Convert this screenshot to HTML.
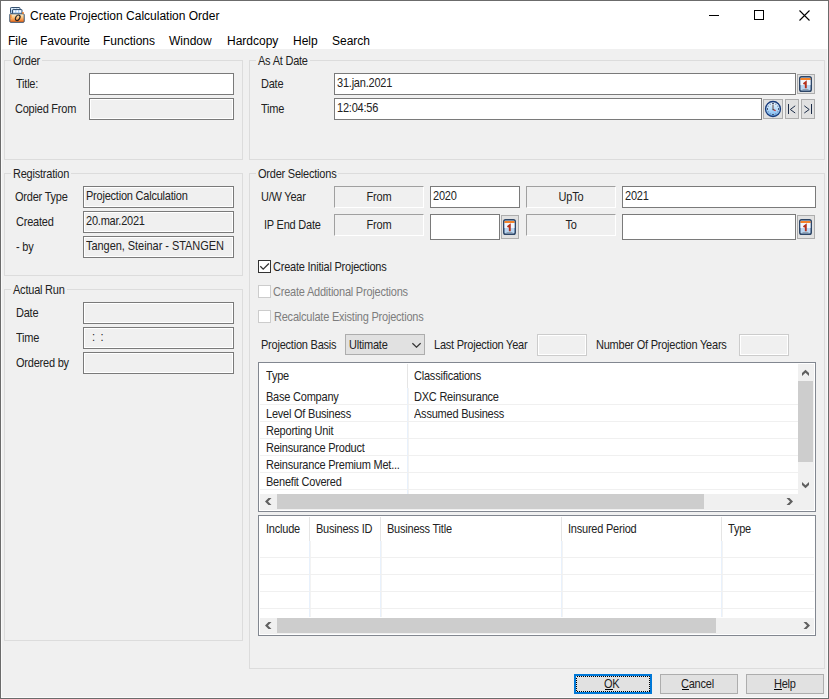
<!DOCTYPE html>
<html><head><meta charset="utf-8">
<style>
*{margin:0;padding:0;box-sizing:border-box}
html,body{width:829px;height:699px;overflow:hidden;background:#f0f0f0}
body{position:relative;font-family:"Liberation Sans",sans-serif;font-size:11px;color:#000}
.a{position:absolute}
.t{position:absolute;white-space:nowrap;line-height:13px;font-size:11px;letter-spacing:-0.22px;color:#222;transform:scaleY(1.12);transform-origin:0 10px}
.win{position:absolute;left:0;top:0;width:829px;height:699px;border:1px solid #6b6b6b;background:#f0f0f0}
.title{position:absolute;left:1px;top:1px;width:827px;height:30px;background:#fff}
.menu{position:absolute;left:1px;top:31px;width:827px;height:18px;background:#fff}
.mt{position:absolute;white-space:nowrap;font-size:12px;line-height:15px}
.grp{position:absolute;border:1px solid #dcdcdc}
.cap{position:absolute;background:#f0f0f0;padding:0 2px 0 2px;white-space:nowrap;line-height:13px;top:-6px;letter-spacing:-0.22px;color:#222;transform:scaleY(1.12);transform-origin:0 10px}
.tb{position:absolute;border:1px solid #7a7a7a;background:#fff}
.ro{position:absolute;border:1px solid #7a7a7a;background:#f0f0f0;box-shadow:inset 0 0 0 1px #fff}
.dis{position:absolute;border:1px solid #cccccc;background:#f0f0f0;box-shadow:inset 0 0 0 1px #fff}
.lbl3d{position:absolute;border-top:1px solid #a0a0a0;border-left:1px solid #a0a0a0;border-bottom:1px solid #fff;border-right:1px solid #fff;background:#f0f0f0;text-align:center;line-height:21px}
.sy{display:inline-block;letter-spacing:-0.22px;color:#222;transform:scaleY(1.12);transform-origin:0 11px}
.btn{position:absolute;border:1px solid #adadad;background:#e1e1e1;text-align:center}
.grid{position:absolute;border:1px solid #828790;background:#fff}
.hl{position:absolute;height:1px;background:#f0f0f0}
.vl{position:absolute;width:1px}
</style></head><body>
<div class="win"></div>
<div class="a" style="left:1px;top:49px;width:1px;height:649px;background:#fafafa"></div>
<div class="a" style="left:1px;top:697px;width:827px;height:1px;background:#fafafa"></div>
<div class="a" style="left:827px;top:49px;width:1px;height:649px;background:#fafafa"></div>
<div class="title"></div>
<div class="menu"></div>

<!-- title icon -->
<svg class="a" style="left:9px;top:7px" width="16" height="16" viewBox="0 0 16 16">
  <defs><linearGradient id="fg" x1="0" y1="0" x2="0" y2="1"><stop offset="0" stop-color="#fff6d8"/><stop offset="0.45" stop-color="#fcc27a"/><stop offset="1" stop-color="#f0600a"/></linearGradient></defs>
  <rect x="1.5" y="0.5" width="9.5" height="6" rx="0.8" fill="#a9cdf0" stroke="#34506e" stroke-width="1"/>
  <rect x="2.4" y="1.3" width="2" height="1.8" fill="#fff"/><rect x="5.3" y="1.3" width="2" height="1.8" fill="#fff"/><rect x="8.2" y="1.3" width="2" height="1.8" fill="#fff"/>
  <rect x="3.5" y="2.5" width="9.5" height="5" rx="0.6" fill="#8fbbe8" stroke="#34506e" stroke-width="1"/>
  <rect x="4.4" y="3.3" width="2" height="2.2" fill="#fff"/><rect x="7.3" y="3.3" width="2" height="2.2" fill="#fff"/><rect x="10.2" y="3.3" width="2" height="2.2" fill="#fff"/>
  <path d="M0.8 7.5 Q0.8 6.8 1.5 6.8 H14.3 Q15.2 6.8 15.2 7.7 V14.5 Q15.2 15.3 14.4 15.3 H1.6 Q0.8 15.3 0.8 14.5 Z" fill="url(#fg)" stroke="#34506e" stroke-width="1"/>
  <rect x="1.3" y="7.6" width="1.2" height="3.5" fill="#f07a20"/>
  <ellipse cx="8.7" cy="10.8" rx="2.0" ry="3.0" transform="rotate(32 8.7 10.8)" fill="none" stroke="#262626" stroke-width="1.2"/>
  <circle cx="14" cy="6" r="0.9" fill="#f07a20"/>
</svg>
<div class="mt" style="left:30px;top:9px">Create Projection Calculation Order</div>

<!-- caption buttons -->
<div class="a" style="left:709px;top:15px;width:10px;height:1px;background:#000"></div>
<div class="a" style="left:754px;top:10px;width:10px;height:10px;border:1px solid #000"></div>
<svg class="a" style="left:799px;top:10px" width="11" height="11" viewBox="0 0 11 11"><path d="M0.5 0.5 L10.5 10.5 M10.5 0.5 L0.5 10.5" stroke="#000" stroke-width="1.1"/></svg>

<!-- menu -->
<div class="mt" style="left:8px;top:34px">File</div>
<div class="mt" style="left:40px;top:34px">Favourite</div>
<div class="mt" style="left:103px;top:34px">Functions</div>
<div class="mt" style="left:169px;top:34px">Window</div>
<div class="mt" style="left:227px;top:34px">Hardcopy</div>
<div class="mt" style="left:293px;top:34px">Help</div>
<div class="mt" style="left:332px;top:34px">Search</div>

<!-- Order group -->
<div class="grp" style="left:4px;top:60px;width:239px;height:100px"><div class="cap" style="left:6px">Order</div></div>
<div class="t" style="left:16px;top:78px">Title:</div>
<div class="tb" style="left:89px;top:73px;width:145px;height:22px"></div>
<div class="t" style="left:15px;top:103px">Copied From</div>
<div class="ro" style="left:89px;top:98px;width:145px;height:22px"></div>

<!-- As At Date group -->
<div class="grp" style="left:249px;top:60px;width:576px;height:100px"><div class="cap" style="left:6px">As At Date</div></div>
<div class="t" style="left:261px;top:78px">Date</div>
<div class="tb" style="left:334px;top:73px;width:462px;height:22px"></div>
<div class="t" style="left:337px;top:77px">31.jan.2021</div>
<div class="t" style="left:261px;top:103px">Time</div>
<div class="tb" style="left:334px;top:98px;width:428px;height:22px"></div>
<div class="t" style="left:337px;top:102px">12:04:56</div>


<!-- calendar buttons -->
<div class="btn" style="left:797px;top:74px;width:18px;height:20px"></div>
<svg class="a" style="left:799px;top:76px" width="13" height="16" viewBox="0 0 13 16">
 <rect x="0.75" y="0.75" width="11.5" height="14.5" rx="1.8" fill="#bcd7f2" stroke="#2d4566" stroke-width="1.5"/>
 <rect x="1.5" y="4" width="10" height="5" fill="#f2f7fd"/>
 <rect x="1.5" y="2" width="10" height="2" fill="#f5832a"/>
 <path d="M4.5 7.9 L6.8 6.1 V12.2" fill="none" stroke="#b3301c" stroke-width="1.9"/>
 <rect x="3.5" y="13" width="6" height="0.9" fill="#8c9cab"/>
</svg>
<div class="btn" style="left:763px;top:99px;width:20px;height:20px"></div>
<svg class="a" style="left:764px;top:100px" width="18" height="18" viewBox="0 0 18 18">
 <defs><linearGradient id="cg" x1="0" y1="0" x2="0" y2="1"><stop offset="0" stop-color="#f4faff"/><stop offset="0.5" stop-color="#b8dcfa"/><stop offset="1" stop-color="#6fb0f0"/></linearGradient></defs>
 <circle cx="9" cy="9" r="7.5" fill="url(#cg)" stroke="#163a7c" stroke-width="1.3"/>
 <rect x="8.00" y="2.80" width="2" height="1.2" fill="#4a5a78"/><circle cx="11.80" cy="4.15" r="0.6" fill="#6a7a98"/><circle cx="13.85" cy="6.20" r="0.6" fill="#6a7a98"/><rect x="14.00" y="8.00" width="1.2" height="2" fill="#4a5a78"/><circle cx="13.85" cy="11.80" r="0.6" fill="#6a7a98"/><circle cx="11.80" cy="13.85" r="0.6" fill="#6a7a98"/><rect x="8.00" y="14.00" width="2" height="1.2" fill="#4a5a78"/><circle cx="6.20" cy="13.85" r="0.6" fill="#6a7a98"/><circle cx="4.15" cy="11.80" r="0.6" fill="#6a7a98"/><rect x="2.80" y="8.00" width="1.2" height="2" fill="#4a5a78"/><circle cx="4.15" cy="6.20" r="0.6" fill="#6a7a98"/><circle cx="6.20" cy="4.15" r="0.6" fill="#6a7a98"/>
 <path d="M9 4.6 V9.6" stroke="#7a6a6a" stroke-width="1.3"/>
 <path d="M8.6 9.6 H9.8" stroke="#333" stroke-width="1.2"/>
 <path d="M9.8 9.8 L11.6 10.8" stroke="#c42020" stroke-width="1.2"/>
</svg>
<div class="btn" style="left:785px;top:99px;width:14px;height:20px"></div>
<svg class="a" style="left:785px;top:99px" width="14" height="20" viewBox="0 0 14 20"><path d="M3.5 5 V15 M10.2 6.8 L5.3 10.5 L10.2 14" fill="none" stroke="#1c2c48" stroke-width="1"/></svg>
<div class="btn" style="left:801px;top:99px;width:14px;height:20px"></div>
<svg class="a" style="left:801px;top:99px" width="14" height="20" viewBox="0 0 14 20"><path d="M10.5 5 V15 M3.3 6.8 L8.2 10.5 L3.3 14" fill="none" stroke="#1c2c48" stroke-width="1"/></svg>
<div class="btn" style="left:501px;top:215px;width:18px;height:24px"></div>
<svg class="a" style="left:503px;top:219px" width="13" height="16" viewBox="0 0 13 16">
 <rect x="0.75" y="0.75" width="11.5" height="14.5" rx="1.8" fill="#bcd7f2" stroke="#2d4566" stroke-width="1.5"/>
 <rect x="1.5" y="4" width="10" height="5" fill="#f2f7fd"/>
 <rect x="1.5" y="2" width="10" height="2" fill="#f5832a"/>
 <path d="M4.5 7.9 L6.8 6.1 V12.2" fill="none" stroke="#b3301c" stroke-width="1.9"/>
 <rect x="3.5" y="13" width="6" height="0.9" fill="#8c9cab"/>
</svg>
<div class="btn" style="left:797px;top:215px;width:18px;height:24px"></div>
<svg class="a" style="left:799px;top:219px" width="13" height="16" viewBox="0 0 13 16">
 <rect x="0.75" y="0.75" width="11.5" height="14.5" rx="1.8" fill="#bcd7f2" stroke="#2d4566" stroke-width="1.5"/>
 <rect x="1.5" y="4" width="10" height="5" fill="#f2f7fd"/>
 <rect x="1.5" y="2" width="10" height="2" fill="#f5832a"/>
 <path d="M4.5 7.9 L6.8 6.1 V12.2" fill="none" stroke="#b3301c" stroke-width="1.9"/>
 <rect x="3.5" y="13" width="6" height="0.9" fill="#8c9cab"/>
</svg>

<!-- Registration group -->
<div class="grp" style="left:4px;top:173px;width:239px;height:103px"><div class="cap" style="left:6px">Registration</div></div>
<div class="t" style="left:15px;top:191px">Order Type</div>
<div class="ro" style="left:83px;top:186px;width:151px;height:22px"></div>
<div class="t" style="left:86px;top:190px">Projection Calculation</div>
<div class="t" style="left:16px;top:216px">Created</div>
<div class="ro" style="left:83px;top:211px;width:151px;height:22px"></div>
<div class="t" style="left:86px;top:215px">20.mar.2021</div>
<div class="t" style="left:16px;top:241px">- by</div>
<div class="ro" style="left:83px;top:236px;width:151px;height:22px"></div>
<div class="t" style="left:86px;top:240px;letter-spacing:-0.05px">Tangen, Steinar - STANGEN</div>

<!-- Actual Run group -->
<div class="grp" style="left:4px;top:289px;width:239px;height:352px"><div class="cap" style="left:6px">Actual Run</div></div>
<div class="t" style="left:16px;top:307px">Date</div>
<div class="ro" style="left:83px;top:302px;width:151px;height:22px"></div>
<div class="t" style="left:16px;top:332px">Time</div>
<div class="ro" style="left:83px;top:327px;width:151px;height:22px"></div>
<div class="t" style="left:92px;top:331px">:&nbsp;&nbsp;:</div>
<div class="t" style="left:16px;top:357px">Ordered by</div>
<div class="ro" style="left:83px;top:352px;width:151px;height:22px"></div>

<!-- Order Selections group -->
<div class="grp" style="left:249px;top:173px;width:576px;height:496px"><div class="cap" style="left:6px">Order Selections</div></div>
<div class="t" style="left:261px;top:191px">U/W Year</div>
<div class="lbl3d" style="left:334px;top:186px;width:90px;height:22px"><span class="sy">From</span></div>
<div class="tb" style="left:430px;top:186px;width:90px;height:22px"></div>
<div class="t" style="left:433px;top:190px">2020</div>
<div class="lbl3d" style="left:526px;top:186px;width:90px;height:22px"><span class="sy">UpTo</span></div>
<div class="tb" style="left:622px;top:186px;width:194px;height:22px"></div>
<div class="t" style="left:625px;top:190px">2021</div>

<div class="t" style="left:264px;top:219px">IP End Date</div>
<div class="lbl3d" style="left:334px;top:214px;width:90px;height:22px"><span class="sy">From</span></div>
<div class="tb" style="left:430px;top:214px;width:70px;height:26px"></div>
<div class="lbl3d" style="left:526px;top:214px;width:90px;height:22px"><span class="sy">To</span></div>
<div class="tb" style="left:622px;top:214px;width:174px;height:26px"></div>

<!-- checkboxes -->
<div class="a" style="left:258px;top:260px;width:13px;height:13px;border:1px solid #333;background:#fff"></div>
<svg class="a" style="left:258px;top:260px" width="13" height="13" viewBox="0 0 13 13"><path d="M2.3 6.3 L5.2 9.2 L10.9 3.5" fill="none" stroke="#333" stroke-width="1.3"/></svg>
<div class="t" style="left:273px;top:261px">Create Initial Projections</div>
<div class="a" style="left:258px;top:285px;width:13px;height:13px;border:1px solid #cccccc;background:#fff"></div>
<div class="t" style="left:273px;top:286px;color:#7d7d7d">Create Additional Projections</div>
<div class="a" style="left:258px;top:310px;width:13px;height:13px;border:1px solid #cccccc;background:#fff"></div>
<div class="t" style="left:274px;top:311px;color:#7d7d7d">Recalculate Existing Projections</div>

<!-- projection basis row -->
<div class="t" style="left:261px;top:339px">Projection Basis</div>
<div class="btn" style="left:345px;top:334px;width:80px;height:21px"></div>
<div class="t" style="left:349px;top:339px">Ultimate</div>
<svg class="a" style="left:411px;top:341px" width="10" height="7" viewBox="0 0 10 7"><path d="M1.4 2.2 L5.5 6.2 L9.6 2.2" fill="none" stroke="#333" stroke-width="1.2"/></svg>
<div class="t" style="left:434px;top:339px">Last Projection Year</div>
<div class="dis" style="left:537px;top:334px;width:50px;height:22px"></div>
<div class="t" style="left:596px;top:339px">Number Of Projection Years</div>
<div class="dis" style="left:739px;top:334px;width:50px;height:22px"></div>

<!-- grid 1 -->
<div class="grid" style="left:258px;top:362px;width:558px;height:150px"></div>
<div class="a" style="left:407px;top:364px;width:1px;height:24px;background:#e5e5e5"></div>
<div class="a" style="left:407px;top:388px;width:1px;height:106px;background:#e8f1fc"></div><div class="a" style="left:408px;top:388px;width:1px;height:106px;background:#f3f3f3"></div>
<div class="hl" style="left:260px;top:404px;width:538px"></div>
<div class="hl" style="left:260px;top:421px;width:538px"></div>
<div class="hl" style="left:260px;top:438px;width:538px"></div>
<div class="hl" style="left:260px;top:455px;width:538px"></div>
<div class="hl" style="left:260px;top:472px;width:538px"></div>
<div class="hl" style="left:260px;top:489px;width:538px"></div>
<div class="t" style="left:266px;top:370px">Type</div>
<div class="t" style="left:414px;top:370px">Classifications</div>
<div class="t" style="left:266px;top:391px">Base Company</div>
<div class="t" style="left:414px;top:391px">DXC Reinsurance</div>
<div class="t" style="left:266px;top:408px">Level Of Business</div>
<div class="t" style="left:414px;top:408px">Assumed Business</div>
<div class="t" style="left:266px;top:425px">Reporting Unit</div>
<div class="t" style="left:266px;top:442px">Reinsurance Product</div>
<div class="t" style="left:266px;top:459px">Reinsurance Premium Met...</div>
<div class="t" style="left:266px;top:476px">Benefit Covered</div>
<!-- vscroll -->
<div class="a" style="left:798px;top:364px;width:16px;height:146px;background:#f0f0f0"></div>
<div class="a" style="left:798px;top:381px;width:15px;height:81px;background:#cdcdcd"></div>
<!-- hscroll -->
<div class="a" style="left:260px;top:494px;width:538px;height:16px;background:#f0f0f0"></div>
<div class="a" style="left:277px;top:494px;width:427px;height:15px;background:#cdcdcd"></div>

<!-- grid 2 -->
<div class="grid" style="left:258px;top:515px;width:558px;height:121px"></div>
<div class="a" style="left:309px;top:517px;width:1px;height:24px;background:#e5e5e5"></div>
<div class="a" style="left:380px;top:517px;width:1px;height:24px;background:#e5e5e5"></div>
<div class="a" style="left:561px;top:517px;width:1px;height:24px;background:#e5e5e5"></div>
<div class="a" style="left:721px;top:517px;width:1px;height:24px;background:#e5e5e5"></div>
<div class="a" style="left:309px;top:541px;width:1px;height:76px;background:#e8f1fc"></div><div class="a" style="left:310px;top:541px;width:1px;height:76px;background:#f3f3f3"></div>
<div class="a" style="left:380px;top:541px;width:1px;height:76px;background:#e8f1fc"></div><div class="a" style="left:381px;top:541px;width:1px;height:76px;background:#f3f3f3"></div>
<div class="a" style="left:561px;top:541px;width:1px;height:76px;background:#e8f1fc"></div><div class="a" style="left:562px;top:541px;width:1px;height:76px;background:#f3f3f3"></div>
<div class="a" style="left:721px;top:541px;width:1px;height:76px;background:#e8f1fc"></div><div class="a" style="left:722px;top:541px;width:1px;height:76px;background:#f3f3f3"></div>
<div class="hl" style="left:260px;top:557px;width:554px"></div>
<div class="hl" style="left:260px;top:574px;width:554px"></div>
<div class="hl" style="left:260px;top:591px;width:554px"></div>
<div class="hl" style="left:260px;top:608px;width:554px"></div>
<div class="t" style="left:266px;top:523px">Include</div>
<div class="t" style="left:316px;top:523px">Business ID</div>
<div class="t" style="left:387px;top:523px">Business Title</div>
<div class="t" style="left:568px;top:523px">Insured Period</div>
<div class="t" style="left:728px;top:523px">Type</div>
<div class="a" style="left:260px;top:618px;width:554px;height:16px;background:#f0f0f0"></div>
<div class="a" style="left:277px;top:618px;width:439px;height:15px;background:#cdcdcd"></div>

<svg class="a" style="left:801px;top:369px" width="10" height="9" viewBox="0 0 10 9"><polygon points="1,4 4.5,0.8 8,4 8,7 4.5,3.8 1,7" fill="#606060"/></svg>
<svg class="a" style="left:801px;top:481px" width="10" height="9" viewBox="0 0 10 9"><polygon points="1,1 4.5,4.2 8,1 8,4 4.5,7.2 1,4" fill="#606060"/></svg>
<svg class="a" style="left:264px;top:497px" width="10" height="9" viewBox="0 0 10 9"><polygon points="4.5,1 7.5,1 4,4.5 7.5,8 4.5,8 1,4.5" fill="#606060"/></svg>
<svg class="a" style="left:785px;top:497px" width="10" height="9" viewBox="0 0 10 9"><polygon points="4.5,1 1.5,1 5,4.5 1.5,8 4.5,8 8,4.5" fill="#606060"/></svg>
<svg class="a" style="left:264px;top:621px" width="10" height="9" viewBox="0 0 10 9"><polygon points="4.5,1 7.5,1 4,4.5 7.5,8 4.5,8 1,4.5" fill="#606060"/></svg>
<svg class="a" style="left:802px;top:621px" width="10" height="9" viewBox="0 0 10 9"><polygon points="4.5,1 1.5,1 5,4.5 1.5,8 4.5,8 8,4.5" fill="#606060"/></svg>
<!-- buttons -->
<div class="btn" style="left:574px;top:674px;width:78px;height:20px;border:2px solid #0078d7"></div>
<svg class="a" style="left:576px;top:676px" width="74" height="16" viewBox="0 0 74 16" shape-rendering="crispEdges"><rect x="0.5" y="0.5" width="73" height="15" fill="none" stroke="#000" stroke-width="1" stroke-dasharray="1 1"/></svg>
<div class="t" style="left:604px;top:678px">OK</div>
<div class="btn" style="left:660px;top:674px;width:78px;height:20px"></div>
<div class="t" style="left:681px;top:678px">Cancel</div>
<div class="btn" style="left:746px;top:674px;width:78px;height:20px"></div>
<div class="t" style="left:774px;top:678px">Help</div>

<div class="a" style="left:605px;top:689px;width:8px;height:1px;background:#000"></div>
<div class="a" style="left:682px;top:689px;width:7px;height:1px;background:#000"></div>
<div class="a" style="left:774px;top:689px;width:8px;height:1px;background:#000"></div>
</body></html>
